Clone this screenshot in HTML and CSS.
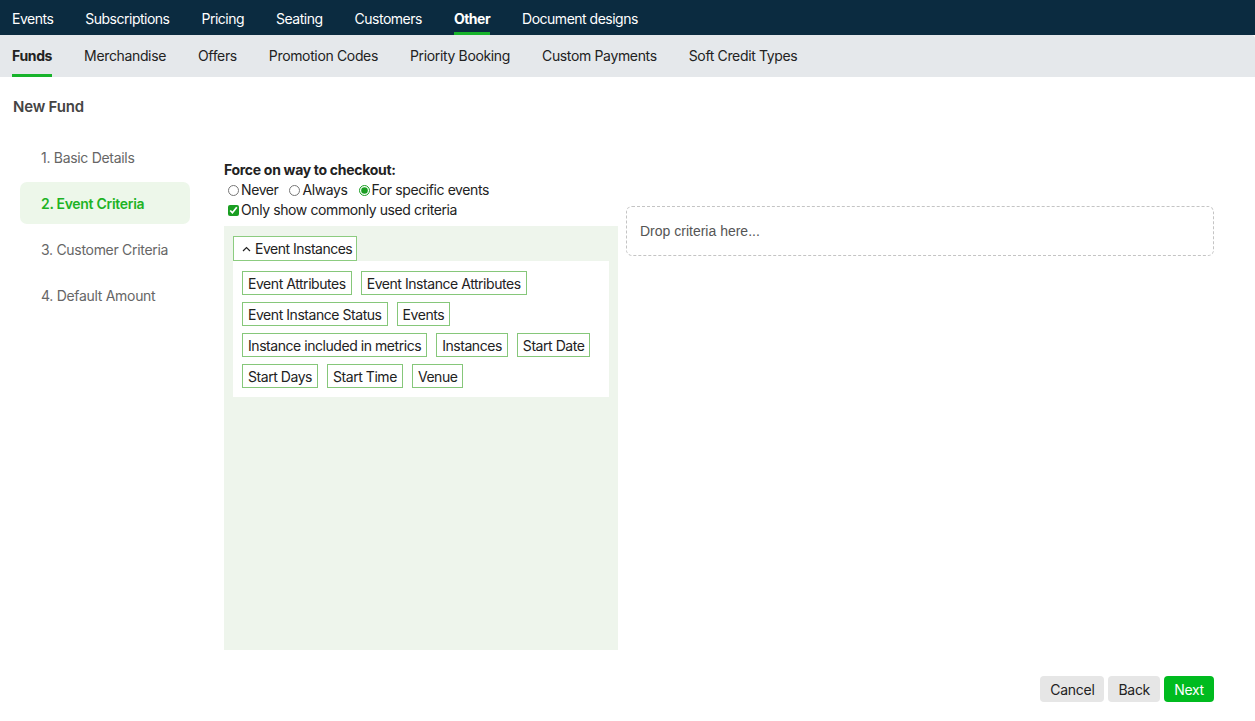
FILE: index.html
```html
<!DOCTYPE html>
<html lang="en">
<head>
  <meta charset="UTF-8">
  <title>New Fund</title>
  <link rel="stylesheet" href="styles.css">
</head>
<body>
  <nav class="topnav">
    <a class="topnav-item">Events</a>
    <a class="topnav-item">Subscriptions</a>
    <a class="topnav-item">Pricing</a>
    <a class="topnav-item">Seating</a>
    <a class="topnav-item">Customers</a>
    <a class="topnav-item active">Other</a>
    <a class="topnav-item">Document designs</a>
  </nav>
  <nav class="subnav">
    <a class="subnav-item active">Funds</a>
    <a class="subnav-item">Merchandise</a>
    <a class="subnav-item">Offers</a>
    <a class="subnav-item">Promotion Codes</a>
    <a class="subnav-item">Priority Booking</a>
    <a class="subnav-item">Custom Payments</a>
    <a class="subnav-item">Soft Credit Types</a>
  </nav>

  <h1 class="page-title">New Fund</h1>

  <div class="wizard">
    <ul class="steps">
      <li class="step">1. Basic Details</li>
      <li class="step active">2. Event Criteria</li>
      <li class="step">3. Customer Criteria</li>
      <li class="step">4. Default Amount</li>
    </ul>

    <div class="criteria">
      <div class="force-label">Force on way to checkout:</div>
      <div class="options">
        <label><input type="radio" name="force"> Never</label>
        <label><input type="radio" name="force"> Always</label>
        <label><input type="radio" name="force" checked> For specific events</label>
      </div>
      <div class="options">
        <label><input type="checkbox" checked> Only show commonly used criteria</label>
      </div>

      <div class="palette">
        <div class="group-head">
          <svg class="caret" width="9" height="6" viewBox="0 0 9 6"><path d="M1 5 L4.5 1.5 L8 5" fill="none" stroke="#222" stroke-width="1.2"/></svg>
          Event Instances
        </div>
        <div class="group-body">
          <span class="chip">Event Attributes</span>
          <span class="chip">Event Instance Attributes</span>
          <span class="chip">Event Instance Status</span>
          <span class="chip">Events</span>
          <span class="chip">Instance included in metrics</span>
          <span class="chip">Instances</span>
          <span class="chip">Start Date</span>
          <span class="chip">Start Days</span>
          <span class="chip">Start Time</span>
          <span class="chip">Venue</span>
        </div>
      </div>
    </div>

    <div class="dropzone-col">
      <div class="dropzone">Drop criteria here...</div>
    </div>
  </div>

  <div class="actions">
    <button class="btn">Cancel</button>
    <button class="btn">Back</button>
    <button class="btn btn-primary">Next</button>
  </div>
</body>
</html>
```

FILE: styles.css
```css
body {
  margin: 0;
  font-family: Inter, "Noto Sans", sans-serif;
  font-size: 14px;
  color: #222;
  background: #fff;
}

.topnav {
  display: flex;
  gap: 32px;
  height: 35px;
  padding: 0 12px;
  background: #0b2b40;
}

.topnav-item {
  display: flex;
  align-items: center;
  color: #fff;
  font-size: 14px;
  letter-spacing: -0.5px;
  border-bottom: 3px solid transparent;
  padding-top: 4px;
}

.topnav-item.active {
  font-weight: 700;
  border-bottom-color: #17b32b;
}

.subnav {
  display: flex;
  gap: 32px;
  height: 42px;
  padding: 0 12px;
  background: #e5e8eb;
  border-top-right-radius: 4px;
}

.subnav-item {
  display: flex;
  align-items: center;
  color: #222;
  font-size: 14px;
  letter-spacing: -0.35px;
  border-bottom: 3px solid transparent;
  padding-top: 2px;
}

.subnav-item.active {
  font-weight: 700;
  border-bottom-color: #17b32b;
}

.page-title {
  margin: 21px 0 0 13px;
  font-size: 15px;
  font-weight: 600;
  color: #444;
  letter-spacing: -0.2px;
  line-height: 18px;
}

.wizard {
  display: flex;
  margin-top: 20px;
  padding-left: 20px;
}

.steps {
  list-style: none;
  margin: 0;
  padding: 0;
  width: 170px;
  display: flex;
  flex-direction: column;
  gap: 4px;
}

.step {
  height: 42px;
  display: flex;
  align-items: center;
  padding-left: 21px;
  color: #666;
  letter-spacing: -0.3px;
  border-radius: 7px;
}

.step.active {
  background: #edf7ea;
  color: #1db325;
  font-weight: 600;
}

.criteria {
  width: 394px;
  margin-left: 34px;
  padding-top: 25px;
}

.force-label {
  font-weight: 700;
  line-height: 17px;
  letter-spacing: -0.3px;
  margin-bottom: 2px;
}

.options {
  display: flex;
  gap: 7px;
  line-height: 20px;
  letter-spacing: -0.4px;
}

.options label {
  display: flex;
  align-items: center;
  gap: 2px;
}

.options input {
  margin: 0 0 0 4px;
  width: 11px;
  height: 11px;
  accent-color: #1a9e22;
}

.palette {
  margin-top: 6px;
  height: 424px;
  box-sizing: border-box;
  padding: 10px 9px;
  background: #eef5ec;
}

.group-head {
  display: inline-flex;
  align-items: center;
  gap: 4px;
  height: 25px;
  box-sizing: border-box;
  padding: 0 4px 0 8px;
  background: #fff;
  border: 1px solid #8ccc80;
  letter-spacing: -0.5px;
}

.group-body {
  display: flex;
  flex-wrap: wrap;
  gap: 7px 9px;
  padding: 10px 9px 9px;
  background: #fff;
}

.chip {
  height: 24px;
  box-sizing: border-box;
  display: flex;
  align-items: center;
  padding: 0 5px;
  border: 1px solid #86c77a;
  letter-spacing: -0.45px;
}

.dropzone-col {
  width: 588px;
  margin-left: 8px;
  padding-top: 70px;
}

.dropzone {
  height: 50px;
  box-sizing: border-box;
  display: flex;
  align-items: center;
  padding-left: 13px;
  border: 1px dashed #c4c4c4;
  border-radius: 6px;
  color: #555;
  font-family: "Liberation Sans", Arial, sans-serif;
}

.actions {
  display: flex;
  justify-content: flex-end;
  gap: 4px;
  margin: 26px 41px 0 0;
}

.btn {
  height: 26px;
  padding: 0 10px;
  border: none;
  border-radius: 4px;
  background: #e6e6e6;
  color: #222;
  font-family: Inter, sans-serif;
  font-size: 14px;
  letter-spacing: -0.3px;
}

.btn-primary {
  background: #00bb1f;
  color: #fff;
  width: 50px;
}
```
